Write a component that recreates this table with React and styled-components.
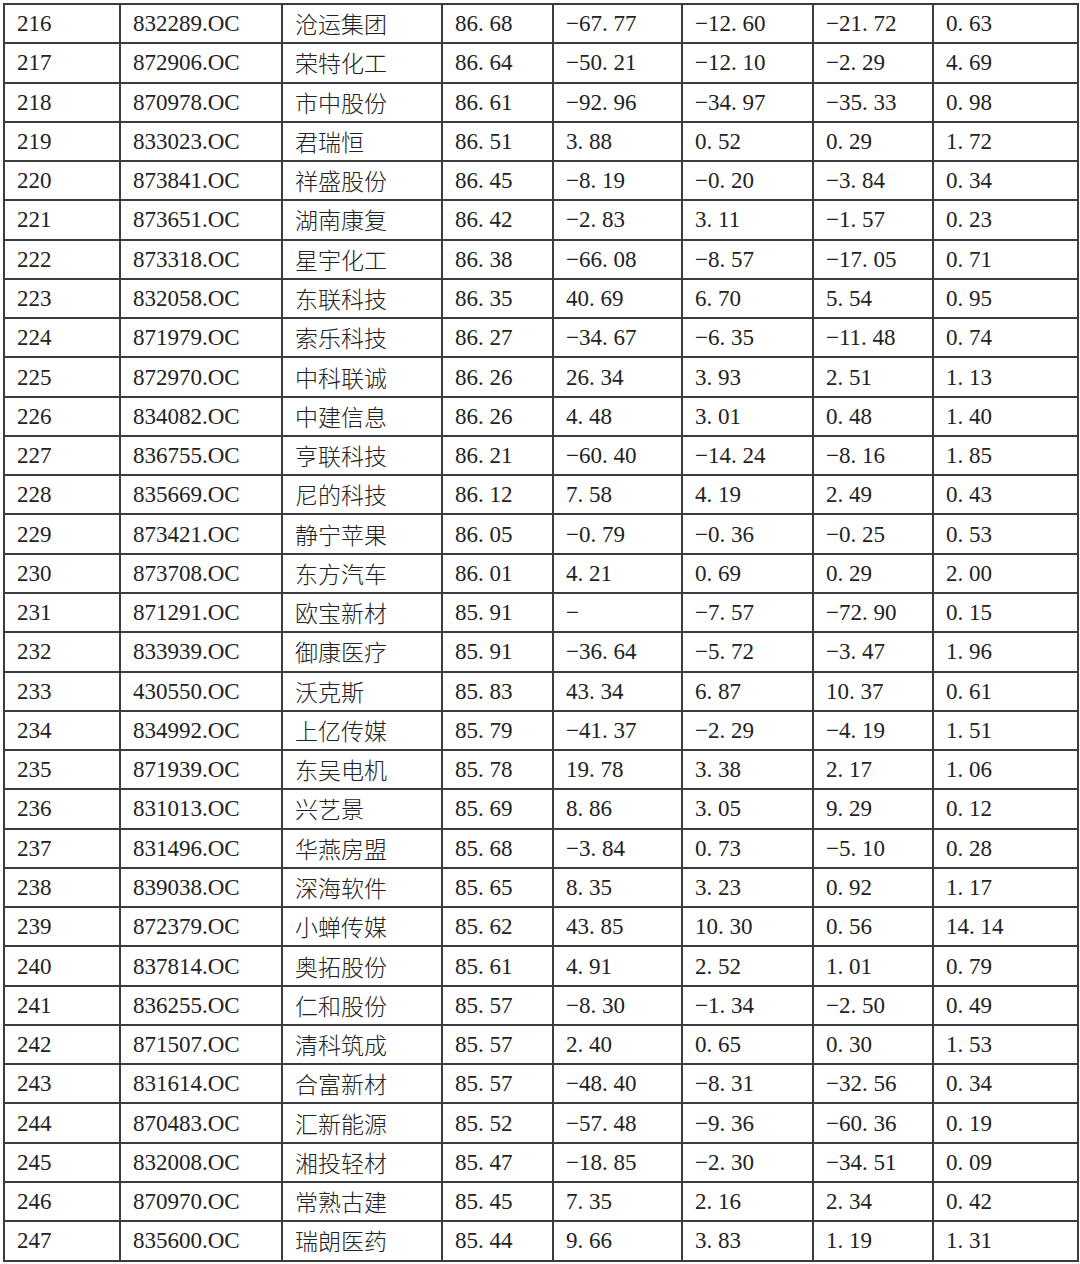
import styled, { createGlobalStyle } from 'styled-components';

const GlobalStyle = createGlobalStyle`
  html, body {
    margin: 0;
    padding: 0;
    background: #ffffff;
  }
`;

const Page = styled.div`
  padding: 3px 0 0 3px;
  width: 1080px;
  box-sizing: border-box;
`;

const Table = styled.table`
  border-collapse: collapse;
  table-layout: fixed;
  width: 1074px;
  font-family: "Liberation Serif", "Noto Sans CJK SC", serif;
  font-size: 23px;
  color: #222;
`;

const Row = styled.tr`
  height: 39.28px;
`;

const Cell = styled.td`
  border: 2px solid #3c3c3c;
  padding: 0 0 0 12px;
  white-space: nowrap;
  overflow: hidden;
  line-height: 1;
  vertical-align: middle;
  font-family: ${(p) => (p.$cjk ? '"Noto Sans CJK SC", sans-serif' : 'inherit')};
  font-weight: ${(p) => (p.$cjk ? 300 : 400)};
`;

const widths = [116, 162, 160, 111, 129, 131, 120, 145];

const rows = [
  ['216', '832289.OC', '沧运集团', '86.68', '-67.77', '-12.60', '-21.72', '0.63'],
  ['217', '872906.OC', '荣特化工', '86.64', '-50.21', '-12.10', '-2.29', '4.69'],
  ['218', '870978.OC', '市中股份', '86.61', '-92.96', '-34.97', '-35.33', '0.98'],
  ['219', '833023.OC', '君瑞恒', '86.51', '3.88', '0.52', '0.29', '1.72'],
  ['220', '873841.OC', '祥盛股份', '86.45', '-8.19', '-0.20', '-3.84', '0.34'],
  ['221', '873651.OC', '湖南康复', '86.42', '-2.83', '3.11', '-1.57', '0.23'],
  ['222', '873318.OC', '星宇化工', '86.38', '-66.08', '-8.57', '-17.05', '0.71'],
  ['223', '832058.OC', '东联科技', '86.35', '40.69', '6.70', '5.54', '0.95'],
  ['224', '871979.OC', '索乐科技', '86.27', '-34.67', '-6.35', '-11.48', '0.74'],
  ['225', '872970.OC', '中科联诚', '86.26', '26.34', '3.93', '2.51', '1.13'],
  ['226', '834082.OC', '中建信息', '86.26', '4.48', '3.01', '0.48', '1.40'],
  ['227', '836755.OC', '亨联科技', '86.21', '-60.40', '-14.24', '-8.16', '1.85'],
  ['228', '835669.OC', '尼的科技', '86.12', '7.58', '4.19', '2.49', '0.43'],
  ['229', '873421.OC', '静宁苹果', '86.05', '-0.79', '-0.36', '-0.25', '0.53'],
  ['230', '873708.OC', '东方汽车', '86.01', '4.21', '0.69', '0.29', '2.00'],
  ['231', '871291.OC', '欧宝新材', '85.91', '-', '-7.57', '-72.90', '0.15'],
  ['232', '833939.OC', '御康医疗', '85.91', '-36.64', '-5.72', '-3.47', '1.96'],
  ['233', '430550.OC', '沃克斯', '85.83', '43.34', '6.87', '10.37', '0.61'],
  ['234', '834992.OC', '上亿传媒', '85.79', '-41.37', '-2.29', '-4.19', '1.51'],
  ['235', '871939.OC', '东吴电机', '85.78', '19.78', '3.38', '2.17', '1.06'],
  ['236', '831013.OC', '兴艺景', '85.69', '8.86', '3.05', '9.29', '0.12'],
  ['237', '831496.OC', '华燕房盟', '85.68', '-3.84', '0.73', '-5.10', '0.28'],
  ['238', '839038.OC', '深海软件', '85.65', '8.35', '3.23', '0.92', '1.17'],
  ['239', '872379.OC', '小蝉传媒', '85.62', '43.85', '10.30', '0.56', '14.14'],
  ['240', '837814.OC', '奥拓股份', '85.61', '4.91', '2.52', '1.01', '0.79'],
  ['241', '836255.OC', '仁和股份', '85.57', '-8.30', '-1.34', '-2.50', '0.49'],
  ['242', '871507.OC', '清科筑成', '85.57', '2.40', '0.65', '0.30', '1.53'],
  ['243', '831614.OC', '合富新材', '85.57', '-48.40', '-8.31', '-32.56', '0.34'],
  ['244', '870483.OC', '汇新能源', '85.52', '-57.48', '-9.36', '-60.36', '0.19'],
  ['245', '832008.OC', '湘投轻材', '85.47', '-18.85', '-2.30', '-34.51', '0.09'],
  ['246', '870970.OC', '常熟古建', '85.45', '7.35', '2.16', '2.34', '0.42'],
  ['247', '835600.OC', '瑞朗医药', '85.44', '9.66', '3.83', '1.19', '1.31'],
];

// numbers use a wide period like the source document
const fmt = (s) => s.replace('.', '. ').replace('-', '−');

export default function App() {
  return (
    <>
      <GlobalStyle />
      <Page>
        <Table>
          <colgroup>
            {widths.map((w, i) => (
              <col key={i} style={{ width: w }} />
            ))}
          </colgroup>
          <tbody>
            {rows.map((r) => (
              <Row key={r[0]}>
                {r.map((v, i) => (
                  <Cell key={i} $cjk={i === 2}>
                    {i <= 2 ? v : fmt(v)}
                  </Cell>
                ))}
              </Row>
            ))}
          </tbody>
        </Table>
      </Page>
    </>
  );
}
